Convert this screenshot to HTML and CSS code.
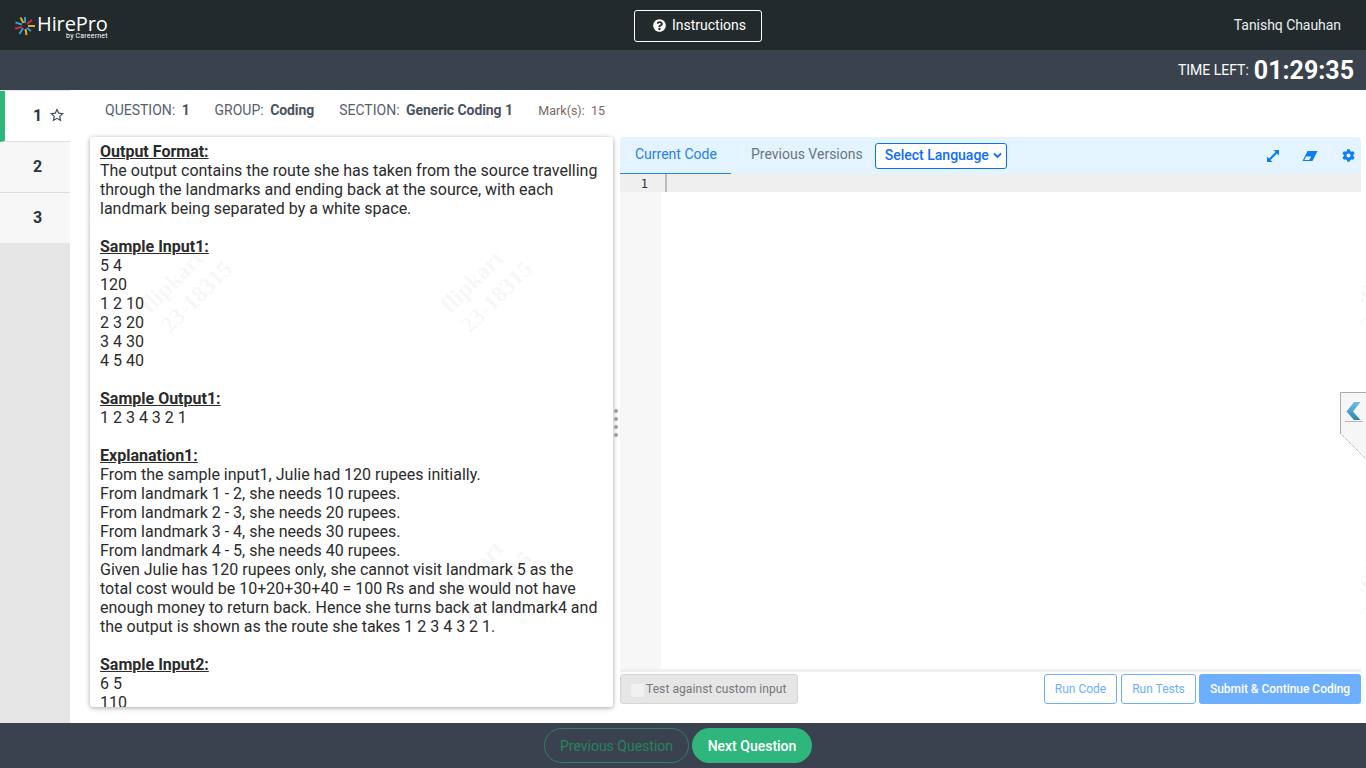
FILE: index.html
```html
<!DOCTYPE html>
<html lang="en">
  <head>
    <meta charset="UTF-8" />
    <title>HirePro Assessment</title>
    <link rel="stylesheet" href="styles.css">
  </head>
  <body>
    <header class="top-bar">
      <div class="logo">
        <svg class="logo-mark" width="22" height="20" viewBox="0 0 22 20">
          <g stroke-width="2" fill="none">
            <path d="M11 7V1" stroke="#2a9fd0" />
            <path d="M13 8L18 4" stroke="#d8264a" />
            <path d="M14 10H21" stroke="#f2a81d" />
            <path d="M13 12L17 15" stroke="#2a9fd0" />
            <path d="M11.500 13L12.500 19" stroke="#f2a81d" />
            <path d="M9 12L5.500 18" stroke="#2a9fd0" />
            <path d="M8 11L1 12.500" stroke="#d8264a" />
            <path d="M8 8.500L1.500 6.500" stroke="#2a9fd0" />
            <path d="M9.500 7L6.500 1.500" stroke="#f2a81d" />
          </g>
        </svg>
        <div class="logo-text">
          <span class="logo-name">HirePro</span>
          <span class="logo-sub">by Careernet</span>
        </div>
      </div>
      <button class="instructions-btn">
        <svg width="13" height="13" viewBox="0 0 512 512"><path fill="#fff" d="M504 256c0 137-111 248-248 248S8 393 8 256 119 8 256 8s248 111 248 248zM263 90c-54 0-89 23-116 64-4 5-3 12 3 16l35 26c5 4 13 3 17-2 18-23 31-36 58-36 21 0 47 14 47 34 0 15-13 23-34 35-24 14-56 31-56 74v6c0 7 5 12 12 12h56c7 0 12-5 12-12v-4c0-30 87-31 87-111 0-60-62-102-121-102zm-7 256c-26 0-48 21-48 48s22 48 48 48 48-21 48-48-22-48-48-48z"/></svg>
        Instructions
      </button>
      <span class="user-name">Tanishq Chauhan</span>
    </header>

    <div class="timer-bar">
      <span class="time-label">TIME LEFT:</span>
      <span class="time-value">01:29:35</span>
    </div>

    <main class="main">
      <nav class="question-nav">
        <div class="question-tab active">
          <span class="tab-num">1</span>
          <svg class="tab-star" width="14" height="14" viewBox="0 0 24 24"><path fill="none" stroke="#3b4a5c" stroke-width="2" d="M12 2.500l2.900 6.300 6.900.8-5.100 4.700 1.400 6.800-6.100-3.400-6.100 3.400 1.400-6.800-5.100-4.700 6.900-.8z"/></svg>
        </div>
        <div class="question-tab"><span class="tab-num">2</span></div>
        <div class="question-tab"><span class="tab-num">3</span></div>
      </nav>

      <div class="content">
        <div class="meta-row">
          <span class="meta-item">QUESTION: <b>1</b></span>
          <span class="meta-item">GROUP: <b>Coding</b></span>
          <span class="meta-item">SECTION: <b>Generic Coding 1</b></span>
          <span class="meta-marks">Mark(s): &nbsp;15</span>
        </div>

        <div class="panes">
          <article class="question-pane">
            <h4>Output Format:</h4>
            <p>The output contains the route she has taken from the source travelling through the landmarks and ending back at the source, with each landmark being separated by a white space.</p>
            <h4>Sample Input1:</h4>
            <p>5 4<br>120<br>1 2 10<br>2 3 20<br>3 4 30<br>4 5 40</p>
            <h4>Sample Output1:</h4>
            <p>1 2 3 4 3 2 1</p>
            <h4>Explanation1:</h4>
            <p>From the sample input1, Julie had 120 rupees initially.<br>From landmark 1 - 2, she needs 10 rupees.<br>From landmark 2 - 3, she needs 20 rupees.<br>From landmark 3 - 4, she needs 30 rupees.<br>From landmark 4 - 5, she needs 40 rupees.<br>Given Julie has 120 rupees only, she cannot visit landmark 5 as the total cost would be 10+20+30+40 = 100 Rs and she would not have enough money to return back. Hence she turns back at landmark4 and the output is shown as the route she takes 1 2 3 4 3 2 1.</p>
            <h4>Sample Input2:</h4>
            <p>6 5<br>110</p>
          </article>

          <div class="splitter"><i></i><i></i><i></i><i></i></div>

          <section class="editor-pane">
            <div class="editor-tabs">
              <span class="editor-tab current">Current Code</span>
              <span class="editor-tab">Previous Versions</span>
              <span class="lang-select">Select Language
                <svg width="9" height="7" viewBox="0 0 9 7"><path d="M1 1.500l3.500 3.500L8 1.500" fill="none" stroke="#0d6efd" stroke-width="1.800"/></svg>
              </span>
              <div class="editor-tools">
                <svg class="tool-expand" width="14" height="14" viewBox="0 0 14 14"><path fill="#0d7ff2" d="M7.500 1H13V6.500L11 4.500 4.500 11 6.500 13H1V7.500L3 9.500 9.500 3z"/></svg>
                <svg width="16" height="12" viewBox="0 0 16 12"><path fill="#0d7ff2" d="M5.500 1H15.500L10.500 11H.5z"/><path fill="#e3f4fe" d="M2.300 10l1.900-3.600h5L7.200 10z"/></svg>
                <svg width="13" height="13" viewBox="0 0 512 512"><path fill="#0d7ff2" d="M487 316l-42-25c4-23 4-47 0-70l42-25c5-3 7-9 5-14-11-35-30-67-54-93-4-4-10-5-15-2l-42 24c-18-15-38-27-60-35V28c0-6-4-11-9-12-37-8-74-8-110 0-5 1-9 6-9 12v48c-22 8-42 20-60 35L91 87c-5-3-11-2-15 2-24 26-43 58-54 93-2 5 0 11 5 14l42 25c-4 23-4 47 0 70l-42 25c-5 3-7 9-5 14 11 35 30 67 54 93 4 4 10 5 15 2l42-24c18 15 38 27 60 35v48c0 6 4 11 9 12 37 8 74 8 110 0 5-1 9-6 9-12v-48c22-8 42-20 60-35l42 24c5 3 11 2 15-2 24-26 43-58 54-93 2-5 0-11-5-14zM256 336c-44 0-80-36-80-80s36-80 80-80 80 36 80 80-36 80-80 80z"/></svg>
              </div>
            </div>
            <div class="code-area">
              <div class="gutter"><div class="gutter-line">1</div></div>
              <div class="code-lines"><div class="active-line"><span class="cursor"></span></div></div>
            </div>
            <div class="editor-footer">
              <label class="custom-input"><span class="fake-check"></span>Test against custom input</label>
              <div class="run-actions">
                <button class="outline-btn run-code">Run Code</button>
                <button class="outline-btn run-tests">Run Tests</button>
                <button class="submit-btn">Submit &amp; Continue Coding</button>
              </div>
            </div>
          </section>
        </div>
      </div>

      <div class="watermark wm-1">flipkart<br>23-18315</div>
      <div class="watermark wm-2">flipkart<br>23-18315</div>
      <div class="watermark wm-3">flipkart<br>23-18315</div>
      <div class="watermark wm-4">flipkart<br>23-18315</div>
      <div class="watermark wm-5">flipkart<br>23-18315</div>
      <div class="watermark wm-6">flipkart<br>23-18315</div>

      <div class="side-handle">
        <svg width="27" height="68" viewBox="0 0 27 68">
          <defs>
            <linearGradient id="chevron" x1="0" y1="0" x2="0" y2="1">
              <stop offset="0" stop-color="#6fc1e6" />
              <stop offset="1" stop-color="#2b83ab" />
            </linearGradient>
          </defs>
          <path d="M.5 68V.5H27V67L.5 41.500" fill="#f6f6f6" stroke="none" />
          <path d="M27 .5H.5V41.500" fill="none" stroke="#aaa" />
          <path d="M.5 41.500L26 67" fill="none" stroke="#999" stroke-dasharray="1 1" />
          <path fill="url(#chevron)" d="M14 10H20.500L13 19.500 20.500 28H14L6.500 19.500z" />
          <path d="M5 29.500H23" stroke="#b5b5b5" stroke-width="1" />
        </svg>
      </div>
    </main>

    <footer class="bottom-bar">
      <button class="prev-btn">Previous Question</button>
      <button class="next-btn">Next Question</button>
    </footer>
  </body>
</html>
```

FILE: styles.css
```css
* {
  box-sizing: border-box;
}

html,
body {
  margin: 0;
  height: 100%;
  overflow: hidden;
}

body {
  display: flex;
  flex-direction: column;
  height: 768px;
  font-family: Roboto, "Liberation Sans", sans-serif;
  color: #212529;
  background: #fff;
}

button {
  font-family: inherit;
}

.top-bar {
  flex: 0 0 50px;
  display: flex;
  align-items: center;
  padding: 0 25px 0 15px;
  background: #222a2c;
}

.logo {
  display: flex;
  align-items: flex-start;
  width: 92px;
  margin-top: 4px;
}

.logo-mark {
  flex: none;
  margin: 2px 0 0 -1px;
}

.logo-text {
  display: flex;
  flex-direction: column;
  align-items: flex-end;
  color: #fff;
}

.logo-name {
  font-family: "Open Sans", sans-serif;
  font-size: 20px;
  line-height: 19px;
  font-weight: 500;
  letter-spacing: -0.1px;
  margin-left: 1px;
}

.logo-sub {
  font-size: 7px;
  line-height: 7px;
  letter-spacing: 0.2px;
}

.instructions-btn {
  display: flex;
  align-items: center;
  justify-content: center;
  gap: 6px;
  width: 128px;
  height: 32px;
  margin: 2px 0 0 527px;
  padding: 0 0 2px 3px;
  font-size: 14px;
  color: #fff;
  background: transparent;
  border: 1px solid #fff;
  border-radius: 3px;
}

.user-name {
  margin-left: auto;
  font-size: 14px;
  letter-spacing: -0.05px;
  color: #e8edf2;
}

.timer-bar {
  flex: 0 0 40px;
  display: flex;
  align-items: center;
  justify-content: flex-end;
  gap: 5px;
  padding-right: 12px;
  color: #fff;
  background: #3a424d;
}

.time-label {
  font-size: 14px;
}

.time-value {
  font-size: 25px;
  font-weight: 700;
}

.main {
  flex: 1;
  display: flex;
  position: relative;
  overflow: hidden;
  min-height: 0;
}

.question-nav {
  flex: 0 0 70px;
  padding-top: 1px;
  background: #e6e6e6;
}

.question-tab {
  display: flex;
  align-items: center;
  height: 51px;
  padding: 0 0 2px 33px;
  gap: 9px;
  background: #f7f7f7;
  border-bottom: 1px solid #dedede;
}

.question-tab:last-child {
  height: 50px;
  border-bottom: 0;
}

.question-tab.active {
  background: #fff;
  border-left: 5px solid #2fb67c;
  padding-left: 28px;
}

.tab-num {
  font-size: 16px;
  font-weight: 700;
  color: #2c3540;
}

.tab-star {
  margin-left: -1px;
}

.content {
  flex: 1;
  display: flex;
  flex-direction: column;
  min-width: 0;
  padding-left: 20px;
}

.meta-row {
  flex: 0 0 47px;
  display: flex;
  align-items: flex-start;
  padding: 12px 0 0 15px;
  gap: 25px;
  font-size: 14px;
  line-height: 17px;
  color: #57606b;
}

.meta-item b {
  margin-left: 3px;
  font-weight: 700;
  letter-spacing: -0.08px;
  color: #4a5360;
}

.meta-marks {
  margin-left: 0.5px;
  font-size: 12.5px;
  color: #7b6a60;
}

.panes {
  display: flex;
  height: 570px;
}

.question-pane {
  flex: 0 0 523px;
  height: 570px;
  padding: 5px 10px 0;
  overflow: hidden;
  font-size: 16px;
  line-height: 19px;
  color: #2b2b2b;
  background: #fff;
  border-radius: 3px;
  box-shadow: 0 1px 5px rgba(0, 0, 0, 0.35);
}

.question-pane h4 {
  margin: 0;
  font-size: 16px;
  line-height: 19px;
  font-weight: 700;
  text-decoration: underline;
}

.question-pane p {
  margin: 0 0 19px;
}

.splitter {
  flex: 0 0 7px;
  display: flex;
  flex-direction: column;
  justify-content: center;
  align-items: center;
  gap: 4px;
  padding: 2px 1px 0 0;
}

.splitter i {
  width: 4px;
  height: 4px;
  background: #9b9b9b;
  border-radius: 50%;
}

.editor-pane {
  flex: 0 0 741px;
  display: flex;
  flex-direction: column;
  position: relative;
  z-index: 1;
  background: #fff;
}

.editor-tabs {
  flex: 0 0 37px;
  display: flex;
  align-items: stretch;
  background: #e3f4fe;
  border-radius: 3px 3px 0 0;
}

.editor-tab {
  display: flex;
  align-items: center;
  padding: 0 15px 3px;
  font-size: 14px;
  white-space: nowrap;
  color: #6b7480;
}

.editor-tab.current {
  width: 111px;
  color: #2680eb;
  border-bottom: 1px solid #2680eb;
}

.editor-tab + .editor-tab {
  padding: 0 12px 3px 20px;
}

.lang-select {
  align-self: center;
  display: flex;
  align-items: center;
  justify-content: space-between;
  width: 132px;
  height: 26px;
  padding: 0 4px 1px 9px;
  font-size: 14px;
  color: #0d6efd;
  background: #fff;
  border: 1px solid #0d6efd;
  border-radius: 3px;
  font-weight: 500;
}

.editor-tools {
  margin-left: auto;
  display: flex;
  align-items: center;
  gap: 24px;
  padding-right: 6px;
}

.tool-expand {
  margin-right: -2px;
}

.code-area {
  flex: 1;
  display: flex;
  min-height: 0;
  border-bottom: 3px solid #efefef;
}

.gutter {
  flex: 0 0 41px;
  background: #f7f7f7;
}

.gutter-line {
  height: 18px;
  padding: 1px 13px 0 0;
  text-align: right;
  font-family: "DejaVu Sans Mono", monospace;
  font-size: 12px;
  line-height: 18px;
  color: #333;
  background: #efefef;
}

.code-lines {
  flex: 1;
}

.active-line {
  height: 18px;
  padding-left: 4px;
  background: #efefef;
}

.cursor {
  display: block;
  width: 2px;
  height: 18px;
  background: #bbb;
}

.editor-footer {
  flex: 0 0 35px;
  display: flex;
  align-items: flex-start;
  justify-content: space-between;
  padding-top: 2px;
}

.custom-input {
  display: flex;
  align-items: center;
  width: 178px;
  height: 30px;
  padding-left: 10px;
  font-size: 12px;
  letter-spacing: 0.08px;
  color: #73787e;
  background: #e6e6e6;
  border: 1px solid #d6d6d6;
  border-radius: 3px;
}

.fake-check {
  width: 13px;
  height: 13px;
  margin: 2px 2px 0 0;
  background: #f1f1f1;
  border-radius: 2px;
}

.run-actions {
  display: flex;
  gap: 4px;
}

.outline-btn {
  height: 30px;
  padding: 0;
  font-size: 12px;
  color: #6eaeff;
  background: #fff;
  border: 1px solid #6eaeff;
  border-radius: 3px;
}

.run-code {
  width: 73px;
}

.run-tests {
  width: 75px;
}

.submit-btn {
  width: 162px;
  height: 30px;
  margin-left: -1px;
  padding: 0;
  font-size: 12px;
  font-weight: 500;
  letter-spacing: -0.03px;
  color: #fff;
  background: #6eaeff;
  border: 0;
  border-radius: 3px;
}

.watermark {
  position: absolute;
  width: 92px;
  transform: rotate(-45deg);
  font-family: "Liberation Serif", serif;
  font-size: 23.5px;
  font-weight: 700;
  line-height: 28px;
  color: rgba(0, 0, 0, 0.05);
  pointer-events: none;
  white-space: nowrap;
}

.wm-1 {
  left: 141px;
  top: 168px;
}

.wm-2 {
  left: 441px;
  top: 168px;
}

.wm-3 {
  left: 1341px;
  top: 168px;
}

.wm-4 {
  left: 141px;
  top: 458px;
}

.wm-5 {
  left: 441px;
  top: 458px;
}

.wm-6 {
  left: 1341px;
  top: 458px;
}

.side-handle {
  position: absolute;
  right: 0;
  top: 302px;
  z-index: 2;
  width: 26px;
  height: 68px;
}

.side-handle svg {
  display: block;
}

.bottom-bar {
  flex: 0 0 45px;
  display: flex;
  align-items: center;
  justify-content: center;
  gap: 3px;
  padding-right: 10px;
  background: #39424e;
}

.prev-btn,
.next-btn {
  height: 35px;
  padding: 0;
  font-size: 14px;
  border-radius: 18px;
}

.prev-btn {
  width: 145px;
  color: #2a8360;
  background: transparent;
  border: 1px solid #2a8360;
}

.next-btn {
  width: 120px;
  font-weight: 500;
  color: #fff;
  background: #2fb67c;
  border: 0;
}
```
